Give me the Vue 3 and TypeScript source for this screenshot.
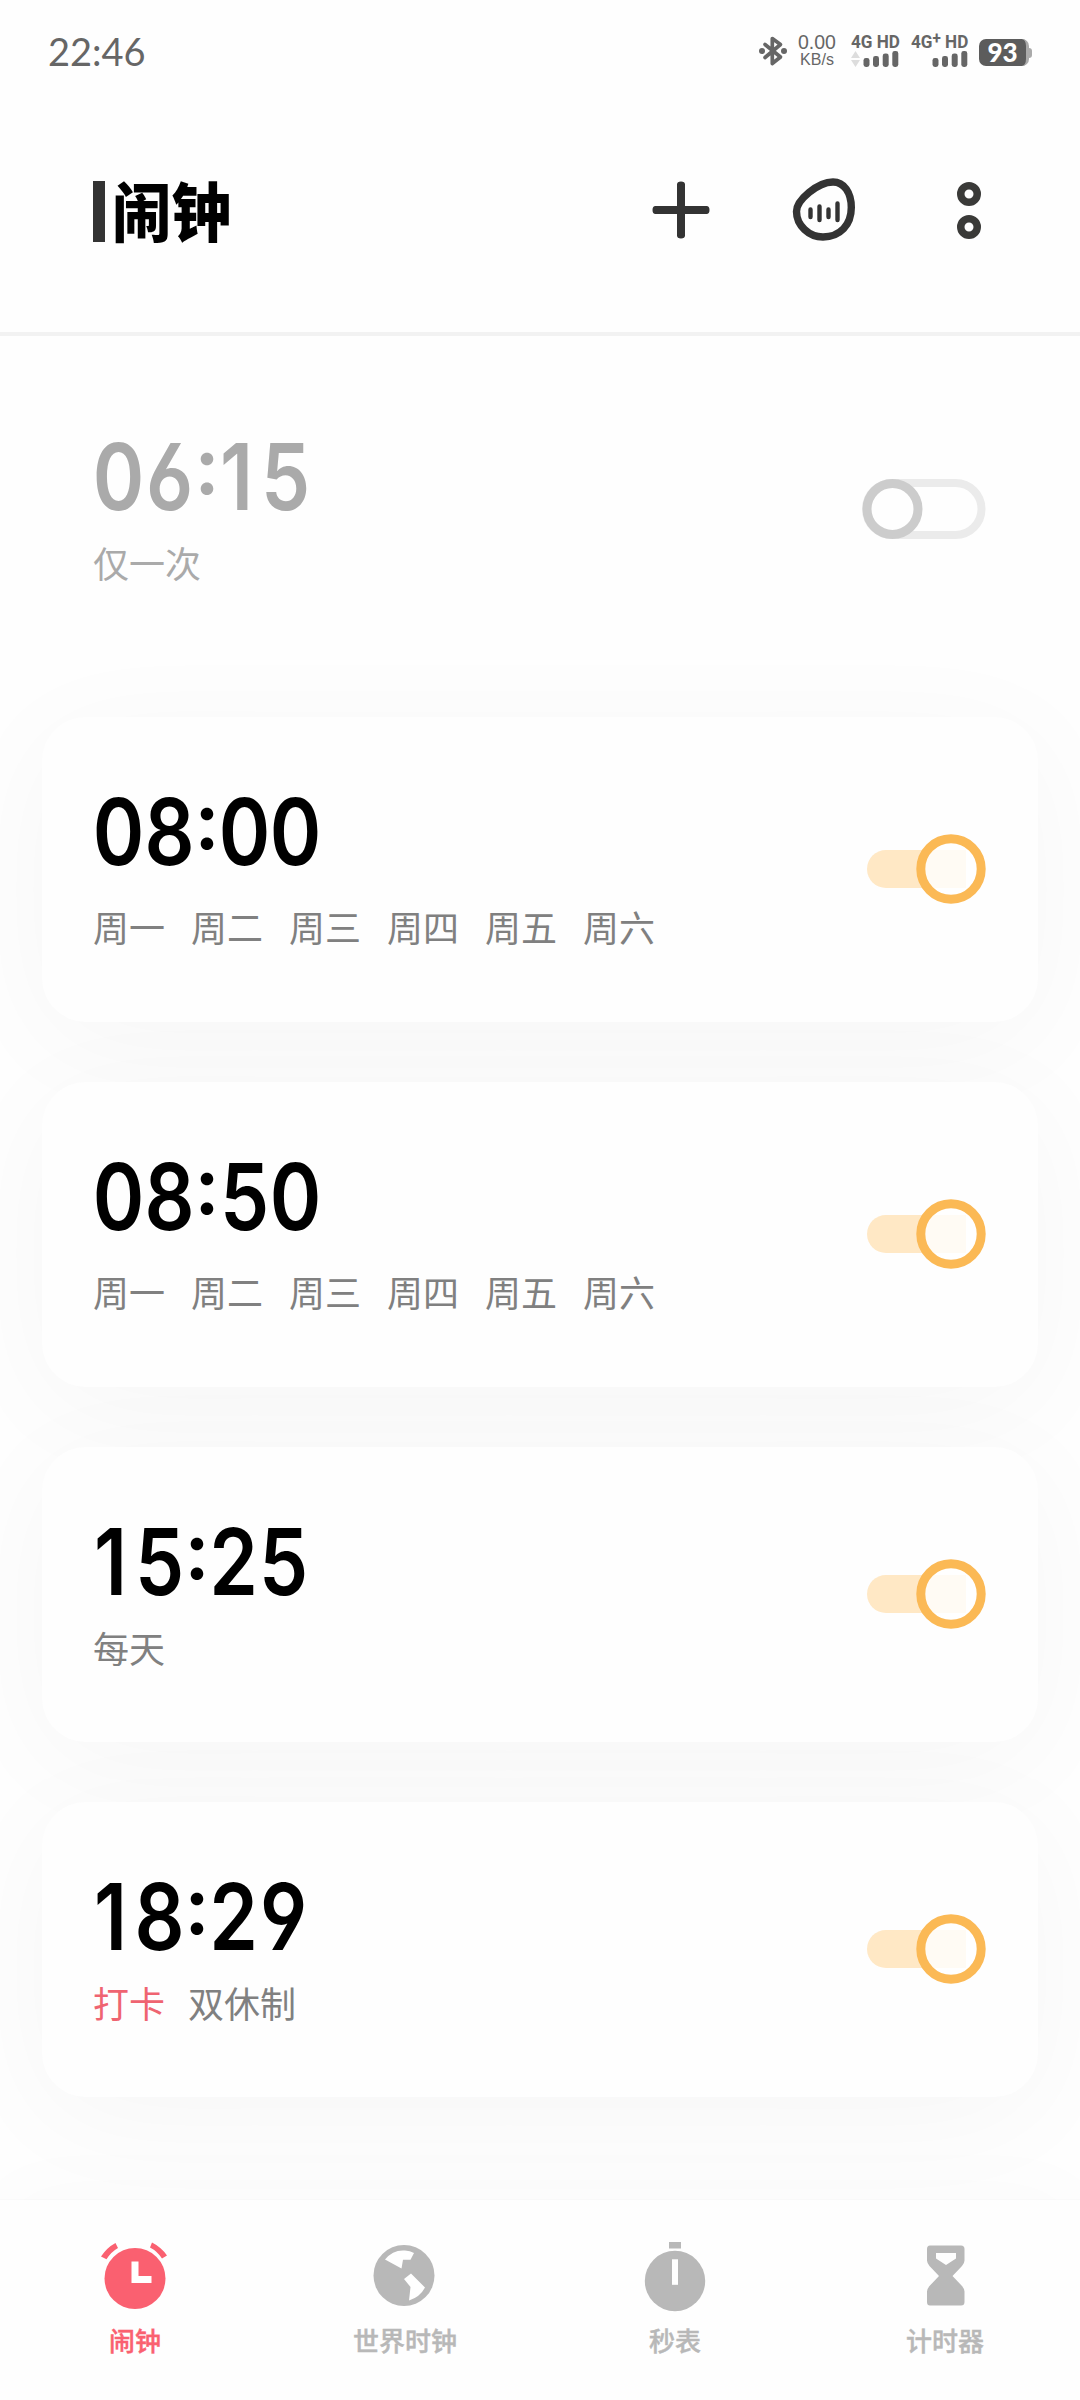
<script setup lang="ts">
interface Alarm {
  time: string
  labels: string[]
  tag?: string
  on: boolean
  size: 'tall' | 'short'
}

const alarms: Alarm[] = [
  { time: '06:15', labels: ['仅一次'], on: false, size: 'short' },
  { time: '08:00', labels: ['周一', '周二', '周三', '周四', '周五', '周六'], on: true, size: 'tall' },
  { time: '08:50', labels: ['周一', '周二', '周三', '周四', '周五', '周六'], on: true, size: 'tall' },
  { time: '15:25', labels: ['每天'], on: true, size: 'short' },
  { time: '18:29', labels: ['双休制'], tag: '打卡', on: true, size: 'short' },
]

const tabs = [
  { id: 'alarm', label: '闹钟', active: true },
  { id: 'world', label: '世界时钟', active: false },
  { id: 'stopwatch', label: '秒表', active: false },
  { id: 'timer', label: '计时器', active: false },
]

function glyphClass(c: string): string {
  if (c === ':') return 'colon'
  if (c === '1') return 'digit one'
  return c === '2' ? 'digit two' : 'digit'
}
</script>

<template>
  <div class="screen">
    <div class="status">
      <span class="clock">22:46</span>
      <div class="indicators">
        <svg class="bt" width="28" height="32" viewBox="0 0 28 32">
          <path d="M6 9.5 L21.5 22 L13.3 28.500 L13.3 3.500 L21.5 9.500 L6 22.500" fill="none" stroke="#666" stroke-width="3.700" stroke-linejoin="round" stroke-linecap="round" />
          <circle cx="3" cy="16" r="3" fill="#666" />
          <circle cx="25" cy="16" r="3" fill="#666" />
        </svg>
        <div class="speed"><span class="rate">0.00</span><span class="unit">KB/s</span></div>
        <div class="sim sim1">
          <span>4G HD</span>
          <svg width="48" height="16" viewBox="0 0 48 16">
            <path d="M0 7 L4.500 0 L9 7Z M0 9 L9 9 L4.500 16Z" fill="#ddd" />
            <g fill="#666">
              <rect x="12.500" y="7" width="6" height="9" rx="2.400" />
              <rect x="22" y="5" width="6" height="11" rx="2.400" />
              <rect x="31.700" y="2.500" width="6" height="13.500" rx="2.400" />
              <rect x="41.300" y="0" width="6" height="16" rx="2.400" />
            </g>
          </svg>
        </div>
        <div class="sim sim2">
          <span>4G<sup>+</sup> HD</span>
          <svg width="36" height="16" viewBox="12 0 36 16">
            <g fill="#666">
              <rect x="12.500" y="7" width="6" height="9" rx="2.400" />
              <rect x="22" y="5" width="6" height="11" rx="2.400" />
              <rect x="31.700" y="2.500" width="6" height="13.500" rx="2.400" />
              <rect x="41.300" y="0" width="6" height="16" rx="2.400" />
            </g>
          </svg>
        </div>
        <div class="battery"><span class="level">93</span><span class="cap"></span></div>
      </div>
    </div>

    <header class="header">
      <span class="bar"></span>
      <h1>闹钟</h1>
      <div class="actions">
        <svg width="58" height="58" viewBox="0 0 58 58">
          <path d="M29 .5a4 3 0 0 1 4 3v51a4 3 0 0 1-8 0v-51a4 3 0 0 1 4-3z M.5 29a3 4 0 0 1 3-4h51a3 4 0 0 1 0 8h-51a3 4 0 0 1-3-4z" fill="#333" />
        </svg>
        <svg width="64" height="64" viewBox="0 0 64 64">
          <path d="M41 4C52 4 59.300 14.500 59.300 29.500C59.300 47 48 59 31 59C17 59 4.500 47.500 4.500 33.500C4.500 22 26 4 41 4Z" fill="none" stroke="#333" stroke-width="7.400" />
          <path d="M18.500 31.500v7.500M27.500 28.500v13.500M36.500 31.500v7.500M45.500 25.500v16.500" stroke="#333" stroke-width="4.400" stroke-linecap="round" />
        </svg>
        <svg width="24" height="57" viewBox="0 0 24 57">
          <circle cx="12" cy="12" r="8.250" fill="none" stroke="#3a3a38" stroke-width="7.500" />
          <circle cx="12" cy="45" r="8.250" fill="none" stroke="#3a3a38" stroke-width="7.500" />
        </svg>
      </div>
    </header>

    <main class="list">
      <section v-for="a in alarms" :key="a.time" class="card" :class="[a.size, { off: !a.on }]">
        <div class="info">
          <div class="time"><span v-for="(c, i) in a.time" :key="i" :class="glyphClass(c)">{{ c }}</span></div>
          <div class="labels">
            <span v-if="a.tag" class="tag">{{ a.tag }}</span>
            <span v-for="l in a.labels" :key="l">{{ l }}</span>
          </div>
        </div>
        <svg v-if="a.on" class="toggle" width="120" height="70" viewBox="0 0 120 70">
          <path d="M20 16H100V54H20A19 19 0 0 1 20 16Z" fill="#ffe8c5" />
          <circle cx="85" cy="35" r="30" fill="#fff" fill-opacity="0.8" stroke="none" />
          <circle cx="85" cy="35" r="30.200" fill="none" stroke="#fbb955" stroke-width="9" />
        </svg>
        <svg v-else class="toggle" width="124" height="60" viewBox="0 0 124 60">
          <rect x="4" y="4" width="115.500" height="52" rx="26" fill="none" stroke="#ebebeb" stroke-width="8" />
          <circle cx="30.500" cy="30" r="25.500" fill="#fefefe" stroke="#ccc" stroke-width="9" />
        </svg>
      </section>
    </main>

    <nav class="tabs">
      <div v-for="t in tabs" :key="t.id" class="tab" :class="{ active: t.active }">
        <svg width="72" height="74" viewBox="0 0 72 74" fill="currentColor">
          <g v-if="t.id === 'alarm'">
            <circle cx="36" cy="38.500" r="30.500" />
            <path d="M2 16.500Q8 7.500 16.500 3L19 8Q12 12 7.500 19.200Z M53 2.500Q62 7 68 15.500L63 18.500Q58 11 51 7.500Z" />
            <path d="M32.500 21.500h7v14.500h13v7h-20z" fill="#fff" />
          </g>
          <g v-else-if="t.id === 'world'">
            <circle cx="35" cy="35.500" r="30.500" />
            <path d="M16 19.500Q24 9.500 36 10.500Q41 10.500 45 13L41.500 19.800H34L32.500 28.500Z M35 39L42 33.500L56 47.500Q51 57 40 60.500L41.500 47Z" fill="#fff" />
          </g>
          <g v-else-if="t.id === 'stopwatch'">
            <rect x="30" y="2" width="12" height="6.500" />
            <circle cx="36" cy="41" r="30.200" />
            <rect x="33" y="19.300" width="6" height="25.500" fill="#fff" />
          </g>
          <path v-else fill-rule="evenodd" d="M21 5.500H52Q55.500 5.500 55.500 9V20.500Q55.500 23 53 26L43.500 36L53 46Q55.500 49 55.500 51.500V62Q55.500 65.500 52 65.500H21Q18 65.500 18 62V51.500Q18 49 20.500 46L30 36L20.500 26Q18 23 18 20.500V9Q18 5.500 21 5.500ZM27 13V18.500L37 25L47 18.500V13Z" />
        </svg>
        <span>{{ t.label }}</span>
      </div>
    </nav>
  </div>
</template>

<style>
body {
  background: #fefefe;
}
</style>

<style scoped>
.screen {
  width: 1080px;
  height: 2400px;
  display: flex;
  flex-direction: column;
  overflow: hidden;
  background: #fefefe;
  font-family: "Noto Sans CJK SC", sans-serif;
}
.status {
  height: 104px;
  flex: none;
  display: flex;
  justify-content: space-between;
  padding: 0 48px;
  color: #666;
}
.clock {
  font: 400 38px/102px Lato, sans-serif;
}
.indicators {
  display: flex;
  align-items: flex-start;
  padding-top: 33px;
}
.bt {
  margin: 2px 10px 0 0;
}
.speed {
  width: 40px;
  display: flex;
  flex-direction: column;
  align-items: center;
  font-family: "Liberation Sans", sans-serif;
  white-space: nowrap;
}
.rate {
  font-size: 19.500px;
  line-height: 19px;
}
.unit {
  font-size: 16px;
  line-height: 15px;
}
.sim {
  display: flex;
  flex-direction: column;
  font: 700 19px/17px Roboto, sans-serif;
  white-space: nowrap;
}
.sim span {
  transform: scaleX(0.9);
  transform-origin: 0 0;
}
.sim svg {
  margin-top: 1px;
}
.sim1 {
  width: 48px;
  margin-left: 14px;
}
.sim2 {
  width: 57px;
  margin-left: 12px;
}
.sim2 svg {
  align-self: flex-end;
}
.sim sup {
  font-size: 17px;
  line-height: 0;
  vertical-align: 4px;
}
.battery {
  display: flex;
  align-items: center;
  margin: 6px 0 0 11px;
}
.level {
  width: 50px;
  height: 27px;
  border-radius: 7px;
  border-right: 3px solid #aaa;
  box-sizing: border-box;
  background: #5c5c5c;
  color: #fff;
  font: 900 26px/27px Lato, sans-serif;
  text-align: center;
}
.cap {
  width: 3px;
  height: 10px;
  background: #aaa;
  border-radius: 0 3px 3px 0;
}
.header {
  height: 228px;
  flex: none;
  display: flex;
  padding: 0 99px 0 93px;
  border-bottom: 4px solid #f2f2f2;
}
.bar {
  width: 12px;
  height: 61px;
  margin-top: 77px;
  background: #333;
}
h1 {
  margin: 60px 0 0 7px;
  width: 130px;
  font-size: 64px;
  line-height: 88px;
  font-weight: 900;
  color: #000;
  transform: scaleX(0.93);
  transform-origin: 0 0;
}
.actions {
  flex: 1;
  display: flex;
  justify-content: flex-end;
  align-items: flex-start;
  padding-top: 74px;
}
.actions svg:nth-child(1) {
  margin: 3px 82px 0 0;
}
.actions svg:nth-child(2) {
  margin-right: 101px;
}
.actions svg:nth-child(3) {
  margin-top: 4px;
}
.list {
  flex: 1;
  min-height: 0;
  display: flex;
  flex-direction: column;
  gap: 60px;
  padding: 26px 42px 0;
  overflow: hidden;
}
.card {
  flex: none;
  box-sizing: border-box;
  height: 295px;
  padding: 0 52px 0 51px;
  border-radius: 44px;
  background: #fefefe;
  box-shadow: 0 20px 120px rgba(0, 0, 0, 0.035);
  display: flex;
  justify-content: space-between;
  align-items: center;
}
.card.tall {
  height: 305px;
}
.card.off {
  box-shadow: none;
  background: none;
}
.toggle {
  margin-top: -1px;
}
.info {
  align-self: flex-start;
  padding-top: 70px;
}
.time {
  height: 90px;
  display: flex;
  font: 560 92px/90px Inter, sans-serif;
  font-feature-settings: "cv03", "cv04";
  white-space: nowrap;
  color: #000;
}
.digit {
  width: 51.200px;
  display: flex;
  justify-content: center;
  transform: scaleX(0.85);
}
.one {
  width: 41.200px;
  transform: translateX(-3px) scaleX(0.85);
}
.two {
  width: 49.400px;
}
.colon {
  width: 23.400px;
  display: flex;
  justify-content: center;
  font-size: 80px;
  font-weight: 600;
  transform: translateY(-12px);
}
.labels {
  display: flex;
  gap: 26px;
  margin-top: 14px;
  font-size: 36px;
  line-height: 52px;
  color: #808080;
}
.tall .labels {
  margin-top: 23px;
}
.off .time,
.off .labels {
  color: #aaa;
}
.tag {
  color: #ef6471;
  margin-right: -3px;
}
.tabs {
  height: 200px;
  flex: none;
  display: flex;
  position: relative;
  background: #fefefe;
  box-shadow: 0 -1px 1px rgba(0, 0, 0, 0.01), 0 -8px 90px rgba(0, 0, 0, 0.02);
}
.tab {
  flex: 1;
  display: flex;
  flex-direction: column;
  align-items: center;
  padding-top: 40px;
  color: #b8b8b8;
}
.tab.active {
  color: #fa6070;
}
.tab span {
  margin-top: 7px;
  font-size: 26px;
  line-height: 38px;
  font-weight: 500;
  -webkit-text-stroke: 0.400px currentColor;
}
</style>
